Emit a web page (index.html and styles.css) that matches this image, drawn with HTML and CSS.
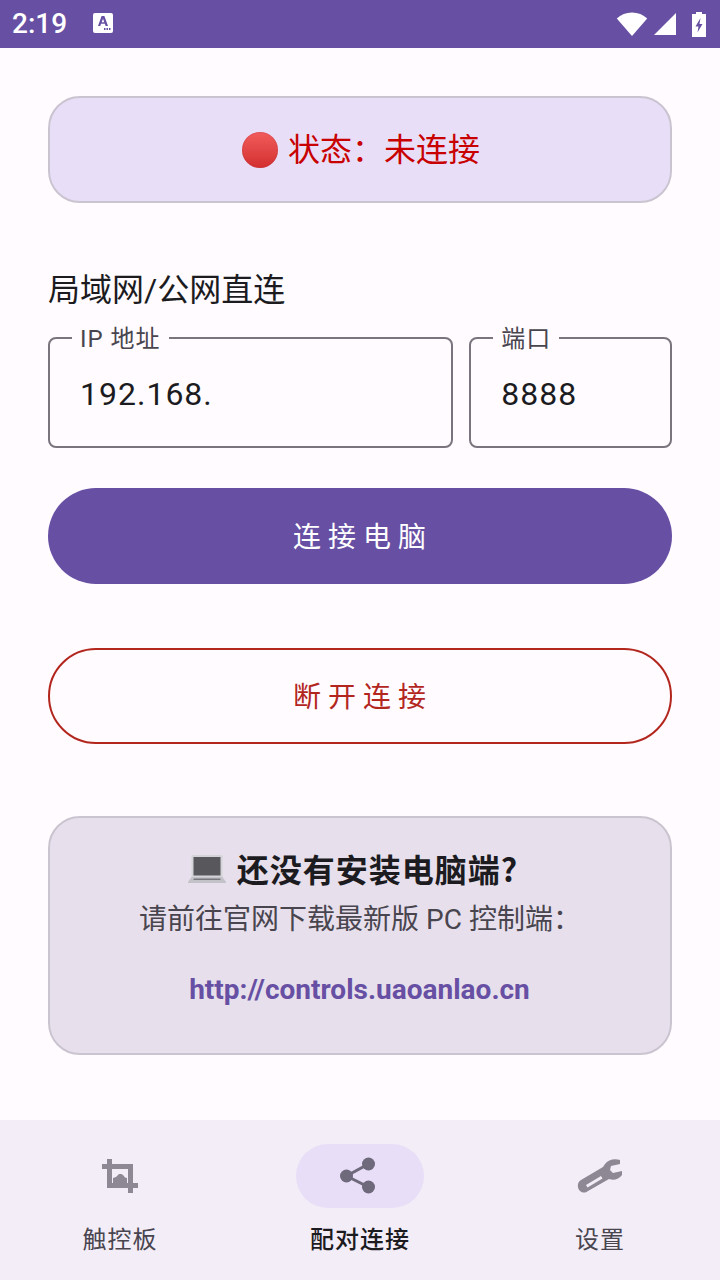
FILE: index.html
```html
<!DOCTYPE html>
<html lang="zh-CN">
<head>
<meta charset="utf-8">
<title>配对连接</title>
<link rel="stylesheet" href="styles.css">
</head>
<body>
<div class="app">
  <header class="statusbar">
    <span class="time">2:19</span>
    <svg class="notif" width="20" height="20" viewBox="0 0 20 20"><path fill="#fff" fill-rule="evenodd" d="M2 0h16a2 2 0 0 1 2 2v16a2 2 0 0 1-2 2H2a2 2 0 0 1-2-2V2a2 2 0 0 1 2-2zM8.600 3 5 13h2.300l.7-2.200h3.900l.7 2.200H15L11.400 3zM10 5.800l1.300 3.400H8.700zM11 15v2h1.500v-2zM13.500 15v2H15v-2zM16 15v2h1.500v-2z"/></svg>
    <span class="spacer"></span>
    <svg class="wifi" width="32" height="24" viewBox="0 0 32 24"><path fill="#fff" d="M16 24 .8 6.500C4.800 2.700 10.100.6 16 .6s11.200 2.100 15.200 5.900z"/></svg>
    <svg class="signal" width="22" height="22" viewBox="0 0 22 22"><path fill="#fff" d="M22 0v22H0z"/></svg>
    <svg class="battery" width="14" height="25" viewBox="0 0 14 25"><path fill="#fff" fill-rule="evenodd" d="M4 0h6v2h4v23H0V2h4zM8.500 6 3.500 14.500h3l-1 6 5-8.500h-3z"/></svg>
  </header>

  <main class="content">
    <section class="status-card">
      <span class="dot"></span>
      <span class="status-text">状态：未连接</span>
    </section>

    <h2 class="section-title">局域网/公网直连</h2>

    <div class="fields">
      <div class="field">
        <span class="field-label">IP 地址</span>
        <span class="field-value">192.168.</span>
      </div>
      <div class="field">
        <span class="field-label">端口</span>
        <span class="field-value">8888</span>
      </div>
    </div>

    <button class="btn btn-primary">连接电脑</button>
    <button class="btn btn-outline">断开连接</button>

    <section class="info-card">
      <h3 class="info-title">
        <svg class="laptop" width="38" height="28" viewBox="0 0 38 28">
          <path fill="#d4d4d8" d="M5 0h28a1.500 1.500 0 0 1 1.500 1.500V22h-31V1.500A1.500 1.500 0 0 1 5 0z"/>
          <rect x="5.500" y="2" width="27" height="18.500" fill="#57575c"/>
          <path fill="#c2c2c8" d="M3.500 22h31L38 27v1H0v-1z"/>
          <path fill="#77777d" d="M6 23.500h26l.8 1.500H5.200z"/>
        </svg>
        还没有安装电脑端?
      </h3>
      <p class="info-text">请前往官网下载最新版 PC 控制端：</p>
      <a class="info-link">http://controls.uaoanlao.cn</a>
    </section>
  </main>

  <nav class="bottom-nav">
    <div class="nav-item">
      <span class="nav-icon">
        <svg width="40" height="40" viewBox="0 0 40 40">
          <path fill="#8d8894" fill-rule="evenodd" d="M7 3h5v5h21v19h5v5h-5v5h-5v-5H7V13H2V8h5zm5 10v14h16V13z"/>
          <path fill="#8d8894" d="M13 27v-5l3-1 1.500-1.500 1.500-1.500h2.500l2 1.500 1.500 2 2 .5V27z"/>
        </svg>
      </span>
      <span class="nav-label">触控板</span>
    </div>
    <div class="nav-item nav-item-active">
      <span class="nav-icon">
        <svg width="40" height="40" viewBox="0 0 40 40">
          <path stroke="#6f697c" stroke-width="3" fill="none" d="M28.500 8 6.500 20l22 11"/>
          <circle cx="28.500" cy="8" r="6.500" fill="#6f697c"/>
          <circle cx="6.500" cy="20" r="6.500" fill="#6f697c"/>
          <circle cx="28.500" cy="31" r="6.500" fill="#6f697c"/>
        </svg>
      </span>
      <span class="nav-label">配对连接</span>
    </div>
    <div class="nav-item">
      <span class="nav-icon">
        <svg width="48" height="40" viewBox="0 0 48 40">
          <path fill="#8d8894" fill-rule="evenodd" d="M44 4C38 2 32 4 29 8l-2 3L5 24c-4 2-4 8-1 11 3 2 5 2 8 0l21-12c5 2 10 0 13-4v-4l-9 2-3-3 1-4 9-2zM10 29l15-9 1.500 2.500-15 9z"/>
        </svg>
      </span>
      <span class="nav-label">设置</span>
    </div>
  </nav>
</div>
</body>
</html>
```

FILE: styles.css
```css
* {
  box-sizing: border-box;
}

html, body {
  margin: 0;
  padding: 0;
}

body {
  font-family: Roboto, "Noto Sans CJK SC", sans-serif;
  background: #fffbfe;
  color: #1c1b1f;
}

.app {
  width: 720px;
  height: 1280px;
  display: flex;
  flex-direction: column;
  overflow: hidden;
}

.statusbar {
  height: 48px;
  flex: none;
  background: #6750a4;
  color: #fff;
  display: flex;
  align-items: center;
  padding: 0 14px 0 12px;
}

.time {
  font-size: 28px;
  font-weight: 500;
  line-height: 48px;
  width: 81px;
}

.spacer {
  flex: 1;
}

.notif {
  margin-top: -2px;
}

.wifi {
  margin-right: 6px;
}

.signal {
  margin-right: 16px;
}

.content {
  flex: 1;
  padding: 48px 48px 0;
  display: flex;
  flex-direction: column;
}

.status-card {
  height: 107px;
  flex: none;
  background: #e8def8;
  border: 2px solid #cac4d0;
  border-radius: 32px;
  display: flex;
  align-items: center;
  justify-content: center;
  gap: 10px;
  padding-left: 2px;
}

.dot {
  width: 36px;
  height: 36px;
  border-radius: 50%;
  background: linear-gradient(#f25c5c, #d32f2f);
  box-shadow: inset 0 0 0 1px rgba(180, 60, 70, .25);
  margin-top: 1px;
}

.status-text {
  font-size: 32px;
  line-height: 44px;
  color: #c80000;
}

.section-title {
  margin: 65px 0 0;
  font-size: 32px;
  font-weight: 400;
  line-height: 44px;
  color: #1c1b1f;
}

.fields {
  display: grid;
  grid-template-columns: 2fr 1fr;
  gap: 16px;
  margin-top: 25px;
}

.field {
  position: relative;
  height: 111px;
  border: 2px solid #79747e;
  border-radius: 8px;
  padding: 0 30px;
  display: flex;
  align-items: center;
}

.field-label {
  position: absolute;
  left: 22px;
  top: -16px;
  padding: 0 8px;
  background: #fffbfe;
  font-size: 24px;
  line-height: 32px;
  letter-spacing: 1px;
  color: #49454f;
  white-space: nowrap;
}

.field-value {
  font-size: 32px;
  letter-spacing: 1px;
  color: #1c1b1f;
  line-height: 44px;
  margin-top: 2px;
}

.btn {
  display: block;
  width: 100%;
  flex: none;
  font-family: inherit;
  font-size: 28px;
  font-weight: 400;
  letter-spacing: 7px;
  border-radius: 48px;
  padding: 0 0 2px 6px;
}

.btn-primary {
  height: 96px;
  margin-top: 40px;
  background: #6750a4;
  border: 0;
  color: #fff;
}

.btn-outline {
  height: 96px;
  margin-top: 64px;
  background: transparent;
  border: 2px solid #b3261e;
  color: #b3261e;
}

.info-card {
  height: 239px;
  flex: none;
  margin-top: 72px;
  background: #e7e0ec;
  border: 2px solid #cac4d0;
  border-radius: 32px;
  padding: 28px 0 0;
  display: flex;
  flex-direction: column;
  align-items: center;
}

.info-title {
  margin: 0;
  padding-right: 14px;
  font-family: "Noto Sans CJK SC", sans-serif;
  font-size: 32px;
  font-weight: 700;
  letter-spacing: 1px;
  line-height: 44px;
  color: #1c1b1f;
  display: flex;
  align-items: center;
  gap: 11px;
}

.laptop {
  flex: none;
  margin-top: 2px;
}

.info-text {
  margin: 10px 0 0;
  font-size: 28px;
  line-height: 40px;
  color: #49454f;
}

.info-link {
  margin-top: 30px;
  font-size: 28px;
  font-weight: 700;
  line-height: 40px;
  color: #6750a4;
  margin-right: 1px;
}

.bottom-nav {
  height: 160px;
  flex: none;
  background: #f3edf7;
  display: flex;
  padding-top: 24px;
}

.nav-item {
  flex: 1;
  display: flex;
  flex-direction: column;
  align-items: center;
  gap: 15px;
}

.nav-icon {
  width: 128px;
  height: 64px;
  border-radius: 32px;
  display: flex;
  align-items: center;
  justify-content: center;
}

.nav-item-active .nav-icon {
  background: #e8def8;
}

.nav-label {
  font-size: 24px;
  line-height: 34px;
  font-weight: 400;
  letter-spacing: 1px;
  color: #49454f;
}

.nav-item-active .nav-label {
  color: #1c1b1f;
  font-weight: 500;
}
```
